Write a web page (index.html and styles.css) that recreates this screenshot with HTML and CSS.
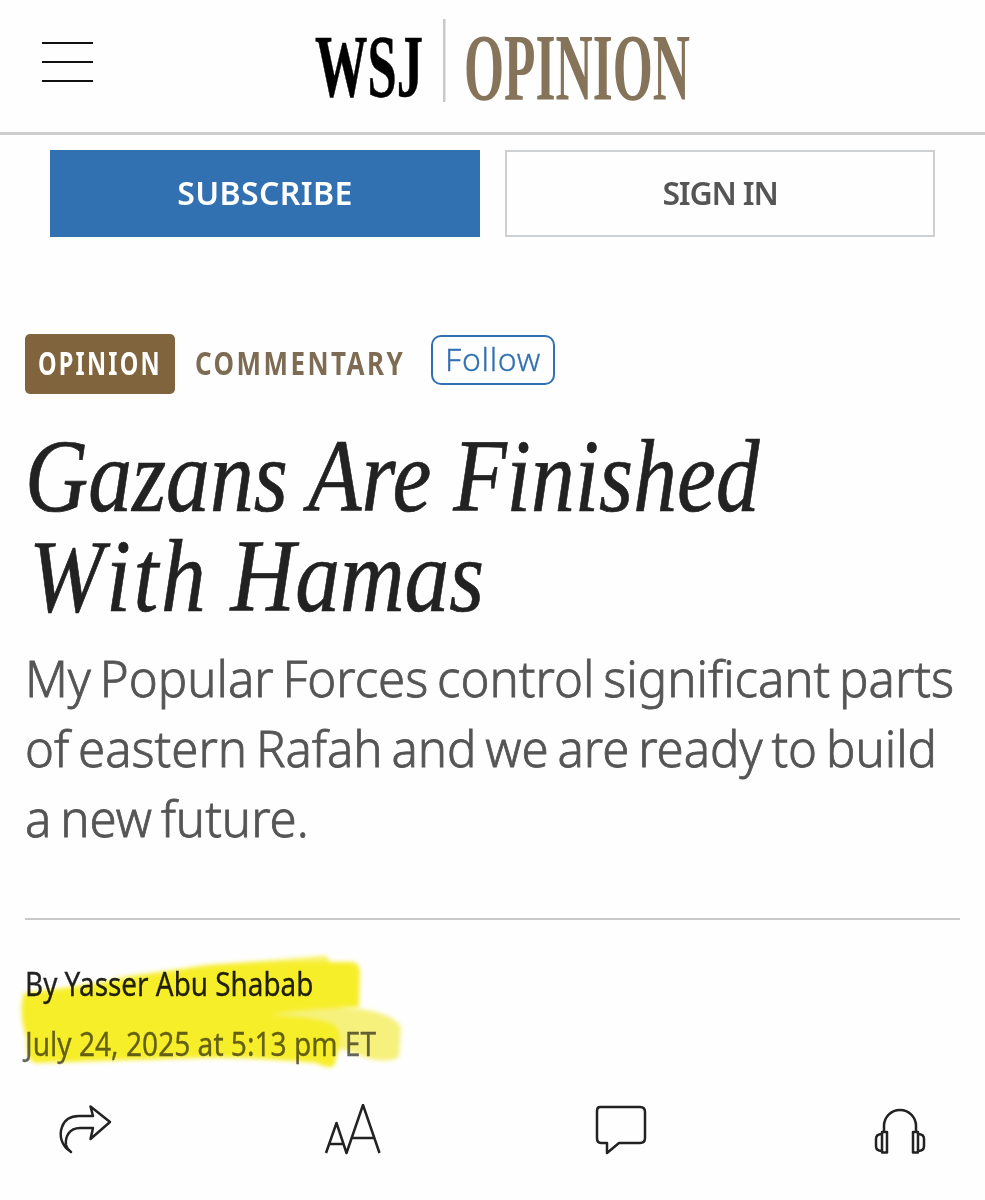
FILE: index.html
```html
<!DOCTYPE html>
<html lang="en">
<head>
  <meta charset="UTF-8">
  <meta name="viewport" content="width=device-width, initial-scale=1.0">
  <title>Gazans Are Finished With Hamas - WSJ</title>
  <link rel="stylesheet" href="styles.css">
</head>
<body>
  <header class="site-header">
    <button class="menu-btn" aria-label="Menu">
      <span></span>
      <span></span>
      <span></span>
    </button>
    <svg class="logo" width="380" height="92" viewBox="0 0 380 92">
      <text class="logo-wsj" x="2" y="86" textLength="108" lengthAdjust="spacingAndGlyphs">WSJ</text>
      <rect class="logo-line" x="130" y="9" width="2.500" height="83"/>
      <text class="logo-opinion" x="151" y="90" textLength="226" lengthAdjust="spacingAndGlyphs">OPINION</text>
    </svg>
  </header>

  <div class="account-bar">
    <a class="btn btn-primary">SUBSCRIBE</a>
    <a class="btn btn-outline">SIGN IN</a>
  </div>

  <main class="article">
    <div class="flashline">
      <span class="tag"><span class="tag-text">OPINION</span></span>
      <span class="section-name"><span class="section-text">COMMENTARY</span></span>
      <button class="follow">Follow</button>
    </div>

    <h1 class="headline">
      <span class="headline-line first">Gazans Are Finished</span>
      <span class="headline-line second"><span class="loose">With</span> Hamas</span>
    </h1>
    <p class="deck">
      <span class="deck-line">My Popular Forces control significant parts</span>
      <span class="deck-line">of eastern Rafah and we are ready to build</span>
      <span class="deck-line">a new future.</span>
    </p>

    <div class="byline">
      <p class="author"><span>By Yasser Abu Shabab</span></p>
      <p class="date"><span>July 24, 2025 at 5:13 pm ET</span></p>
      <!-- Highlighter strokes -->
      <svg class="marker" width="400" height="130" viewBox="0 0 400 130">
        <path class="stroke-light" d="M130 70 Q260 52 360 58 Q392 62 401 76 L399 106 Q390 112 370 108 L330 94 L130 92Z"/>
        <path class="stroke-faint" d="M110 27 L210 14 L320 5 Q328 3 330 11 L332 30Z"/>
        <path class="stroke-main" d="M24 42 Q100 33 200 15 Q240 11 300 11 L352 11 Q359 12 360 20 L359 56 Q300 58 270 64 Q320 66 334 74 Q342 80 339 98 L334 115 Q328 118 316 112 Q250 106 200 107 Q100 110 36 112 Q26 111 27 88 Q20 70 22 50Z"/>
      </svg>
    </div>
  </main>

  <nav class="toolbar">
    <svg class="tool share" width="54" height="52" viewBox="0 0 54 52">
      <path d="M32.500 2.500 L52 18 L32.500 35 L35 24 H22 C11 24 7 33 8 41 Q9 45 13 48 C3 42 1 31 4 23 C7 14 14 12 21 12 H35Z"/>
    </svg>
    <svg class="tool size" width="58" height="52" viewBox="0 0 58 52">
      <path d="M2 49 L12.500 19 L22.500 49 L39 1 L55.500 49 M6 40 H19 M28 34 H50"/>
    </svg>
    <svg class="tool comment" width="54" height="52" viewBox="0 0 54 52">
      <path d="M6 3 H46 Q51 3 51 8 V34 Q51 39 46 39 H25 L13 49 V39 H7 Q3 39 3 34 V7 Q3 3 6 3Z"/>
    </svg>
    <svg class="tool listen" width="54" height="52" viewBox="0 0 54 52">
      <path d="M11 28 V22 A16 16 0 0 1 43 22 V28 M9 28 H14 V48.500 H9Z M40 28 H45 V48.500 H40Z M9 30 Q3 30 3 35 V42 Q3 47 9 47 M45 30 Q51 30 51 35 V42 Q51 47 45 47"/>
    </svg>
  </nav>
</body>
</html>
```
FILE: styles.css
```css
* {
  box-sizing: border-box;
}
body {
  margin: 0;
  background-color: #fefefe;
  color: #222;
  font-family: "Noto Sans", sans-serif;
}
h1, p {
  margin: 0;
}
button {
  background: none;
  font-family: inherit;
}

/* Header */
.site-header {
  display: flex;
  align-items: flex-start;
  height: 135px;
  padding: 10px 0 0 42px;
  border-bottom: 3px solid #cecece;
}
.menu-btn {
  display: flex;
  flex-direction: column;
  gap: 17px;
  width: 51px;
  margin: 32px 220px 0 0;
  padding: 0;
  border: 0;
}
.menu-btn span {
  height: 2px;
  background-color: #111;
}
.logo {
  overflow: visible;
}
.logo-wsj, .logo-opinion {
  font-family: "Liberation Serif", serif;
  font-weight: bold;
}
.logo-wsj {
  font-size: 88px;
  fill: #000;
  stroke: #000;
  stroke-width: 0.6;
}
.logo-line {
  fill: #c9c9c9;
}
.logo-opinion {
  font-size: 96px;
  fill: #86745a;
}

/* Subscribe / sign in */
.account-bar {
  display: flex;
  gap: 25px;
  padding: 15px 50px 0;
}
.btn {
  width: 50%;
  height: 87px;
  line-height: 86px;
  text-align: center;
  font-size: 32px;
  font-weight: 600;
}
.btn-primary {
  background-color: #3271b1;
  color: #fff;
  letter-spacing: 0.4px;
}
.btn-outline {
  border: 2px solid #cdd1d3;
  line-height: 82px;
  color: #555;
  letter-spacing: -1.2px;
}

/* Article head */
.article {
  padding: 97px 25px 0;
}
.flashline {
  display: flex;
  height: 60px;
  font-size: 32px;
  font-weight: 700;
  line-height: 57px;
  white-space: nowrap;
}
.tag {
  width: 150px;
  padding-left: 13px;
  border-radius: 5px;
  background-color: #80643d;
  color: #fff;
}
.section-name {
  width: 256px;
  padding-left: 20px;
  color: #7d6c53;
}
.tag-text, .section-text, .author span, .date span {
  display: inline-block;
  transform-origin: left;
}
.tag-text {
  letter-spacing: 3px;
  transform: scaleX(0.735);
}
.section-text {
  letter-spacing: 3px;
  transform: scaleX(0.812);
}
.follow {
  width: 124px;
  height: 50px;
  margin-top: 1px;
  padding: 0;
  border: 2px solid #3271b1;
  border-radius: 10px;
  color: #3271b1;
  font-size: 32px;
  font-weight: 300;
  letter-spacing: 0.7px;
  line-height: 41px;
  -webkit-text-stroke: 0.3px #3271b1;
}
.follow::after {
  content: "";
  display: block;
  height: 4px;
}
.headline {
  margin-top: 32px;
  font-family: "Liberation Serif", serif;
  font-size: 104px;
  font-style: italic;
  font-weight: normal;
  line-height: 100px;
  white-space: nowrap;
  -webkit-text-stroke: 0.7px #222;
}
.headline-line, .deck-line {
  display: block;
  width: max-content;
  transform-origin: left;
}
.first {
  transform: scaleX(0.842);
}
.second {
  margin-left: 4px;
  transform: scaleX(0.86);
}
.loose {
  font-kerning: none;
  letter-spacing: 3px;
}
.deck {
  margin-top: 17px;
  color: #555;
  font-size: 50px;
  font-weight: 300;
  line-height: 70px;
  white-space: nowrap;
  word-spacing: -4px;
  -webkit-text-stroke: 0.8px #555;
}
.deck-line {
  transform: scaleX(0.983);
}

/* Byline */
.byline {
  position: relative;
  height: 165px;
  margin-top: 65px;
  padding-top: 34px;
  border-top: 2px solid #c9c9c9;
  font-size: 33px;
  line-height: 60px;
  white-space: nowrap;
}
.author span {
  transform: scaleX(0.845);
}
.date span {
  transform: scaleX(0.852);
}
.author {
  -webkit-text-stroke: 0.3px #222;
}
.date {
  color: #666;
  -webkit-text-stroke: 0.3px #666;
}
.marker {
  position: absolute;
  left: -25px;
  top: 31px;
  overflow: visible;
  mix-blend-mode: multiply;
  filter: blur(2px);
}
.stroke-main {
  fill: #f8ef2a;
}
.stroke-light {
  fill: #f7f27c;
}
.stroke-faint {
  fill: #f8f46a;
}

/* Article tools */
.toolbar {
  display: flex;
  padding: 21px 58px 0;
}
.tool {
  fill: none;
  stroke: #222;
  stroke-width: 2.5;
  stroke-linejoin: round;
}
.size {
  margin-left: 212px;
}
.comment {
  margin-left: 212px;
}
.listen {
  margin-left: 225px;
}
```
